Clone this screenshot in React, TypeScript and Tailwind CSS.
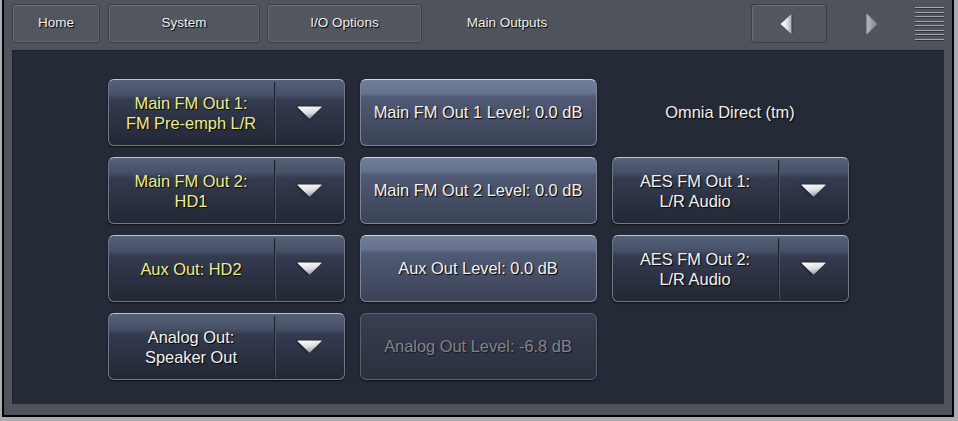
import React from 'react';

const font = "font-['Liberation_Sans','Noto_Sans',Arial,sans-serif]";
const shadow = '[text-shadow:1px_1px_1px_#000]';

function Tab({ label, className }: { label: string; className: string }) {
  return (
    <div
      className={`${className} h-[39px] flex items-center justify-center rounded-[3px] border border-[#3b3f47] bg-[#51565f] shadow-[inset_1px_1px_0_#676c76,inset_-1px_-1px_0_#5d626b] text-[13.5px] text-[#eeeeee] ${shadow}`}
    >
      {label}
    </div>
  );
}

function Arrow() {
  return (
    <svg width="25" height="13" viewBox="0 0 25 13" className="drop-shadow-[-1px_0_1px_rgba(0,0,0,0.7)]">
      <defs>
        <linearGradient id="dd" x1="0" y1="0" x2="0.3" y2="1">
          <stop offset="0" stopColor="#ffffff" />
          <stop offset="0.6" stopColor="#dcdde0" />
          <stop offset="1" stopColor="#9c9ea4" />
        </linearGradient>
      </defs>
      <path d="M1 0.5 L24 0.5 Q25 0.5 24.2 1.4 L13.2 12.3 Q12.5 13 11.8 12.3 L0.8 1.4 Q0 0.5 1 0.5 Z" fill="url(#dd)" />
    </svg>
  );
}

function Dropdown({ lines, yellow }: { lines: string[]; yellow?: boolean }) {
  return (
    <div className="flex rounded-[6px] border border-[#6f778a] border-t-[#bfc5d2] bg-[linear-gradient(180deg,#566077_0%,#485168_22%,#353c50_31%,#2b3142_65%,#232836_100%)] shadow-[0_1px_2px_rgba(0,0,0,0.7)]">
      <div
        className={`w-[165px] flex flex-col items-center justify-center text-center text-[16.4px] leading-[20px] ${shadow} ${yellow ? 'text-[#eeee8c]' : 'text-[#f2f2f2]'}`}
      >
        {lines.map((l) => (
          <span key={l}>{l}</span>
        ))}
      </div>
      <div className="my-[2px] w-px bg-[#1d2230] shadow-[1px_0_0_#4a5266]" />
      <div className="flex-1 flex items-center justify-center pl-[1px]">
        <Arrow />
      </div>
    </div>
  );
}

function LevelButton({ label, disabled }: { label: string; disabled?: boolean }) {
  if (disabled) {
    return (
      <div className="flex items-center justify-center rounded-[6px] border border-[#596072] bg-[linear-gradient(180deg,#3a4051_0%,#323847_40%,#2b303e_100%)] shadow-[0_1px_2px_rgba(0,0,0,0.7)] text-[16.4px] text-[#80848e] [text-shadow:1px_1px_1px_#15181f]">
        {label}
      </div>
    );
  }
  return (
    <div
      className={`flex items-center justify-center rounded-[6px] border border-[#7c8498] border-t-[#d2d7e2] bg-[linear-gradient(180deg,#727d99_0%,#66728f_20%,#505a74_27%,#464f66_60%,#3b4358_100%)] shadow-[0_1px_2px_rgba(0,0,0,0.7)] text-[16.4px] text-[#f2f2f2] ${shadow}`}
    >
      {label}
    </div>
  );
}

export default function App() {
  return (
    <div className={`w-[958px] h-[421px] flex bg-[#a9acb1] pl-[2px] pr-[4px] pb-[4px] ${font}`}>
      <div className="flex-1 flex flex-col border-l-2 border-r-2 border-b-2 border-black bg-[#4e535c]">
        {/* top bar */}
        <div className="h-[50px] flex items-start pt-[4px] pl-[8px]">
          <Tab label="Home" className="w-[88px]" />
          <Tab label="System" className="ml-[8px] w-[152px]" />
          <Tab label="I/O Options" className="ml-[7px] w-[155px]" />
          <div className={`w-[170px] h-[39px] flex items-center justify-center text-[13.5px] text-[#eeeeee] ${shadow}`}>
            Main Outputs
          </div>
          <div className="ml-[159px] w-[76px] h-[39px] flex items-center justify-center rounded-[3px] border border-[#3b3f47] bg-[#51565f] shadow-[inset_1px_1px_0_#676c76]">
            <svg width="13" height="22" viewBox="0 0 13 22" className="mr-[6px]">
              <defs>
                <linearGradient id="la" x1="0" y1="0" x2="1" y2="0">
                  <stop offset="0" stopColor="#ffffff" />
                  <stop offset="0.6" stopColor="#e2e3e6" />
                  <stop offset="1" stopColor="#9a9da4" />
                </linearGradient>
              </defs>
              <path d="M12 0.5 L12 21.5 L0.5 11 Z" fill="url(#la)" />
              <path d="M12 0.5 L12 21.5" stroke="#3a3e46" strokeWidth="1" />
            </svg>
          </div>
          <div className="ml-[5px] w-[76px] h-[39px] flex items-center justify-center">
            <svg width="12" height="22" viewBox="0 0 12 22" className="ml-[3px]">
              <defs>
                <linearGradient id="ra" x1="0" y1="0" x2="1" y2="0">
                  <stop offset="0" stopColor="#b4b7bd" />
                  <stop offset="1" stopColor="#7d818a" />
                </linearGradient>
              </defs>
              <path d="M0.5 0.5 L11.5 11 L0.5 21.5 Z" fill="url(#ra)" />
            </svg>
          </div>
          <div className="ml-[7px] w-[29px] h-[39px] flex flex-col gap-[3.5px] pt-[3px]">
            {[0, 1, 2, 3, 4, 5, 6, 7].map((i) => (
              <div key={i} className="h-px bg-[#a3a7ae] shadow-[0_1px_0_#30343b]" />
            ))}
          </div>
        </div>

        {/* main panel */}
        <div className="flex-1 mx-[8px] mb-[11px] bg-[#242a36] shadow-[inset_0_1px_0_#1b1f28,inset_1px_0_0_#1e222b] flex justify-center pt-[29px]">
          <div className="grid grid-cols-[237px_237px_237px] auto-rows-[67px] gap-x-[15px] gap-y-[11px] content-start">
            <Dropdown lines={['Main FM Out 1:', 'FM Pre-emph L/R']} yellow />
            <LevelButton label="Main FM Out 1 Level: 0.0 dB" />
            <div className={`flex items-center justify-center text-[16.4px] text-[#f0f0f0] ${shadow}`}>
              Omnia Direct (tm)
            </div>

            <Dropdown lines={['Main FM Out 2:', 'HD1']} yellow />
            <LevelButton label="Main FM Out 2 Level: 0.0 dB" />
            <Dropdown lines={['AES FM Out 1:', 'L/R Audio']} />

            <Dropdown lines={['Aux Out: HD2']} yellow />
            <LevelButton label="Aux Out Level: 0.0 dB" />
            <Dropdown lines={['AES FM Out 2:', 'L/R Audio']} />

            <Dropdown lines={['Analog Out:', 'Speaker Out']} />
            <LevelButton label="Analog Out Level: -6.8 dB" disabled />
          </div>
        </div>
      </div>
    </div>
  );
}
